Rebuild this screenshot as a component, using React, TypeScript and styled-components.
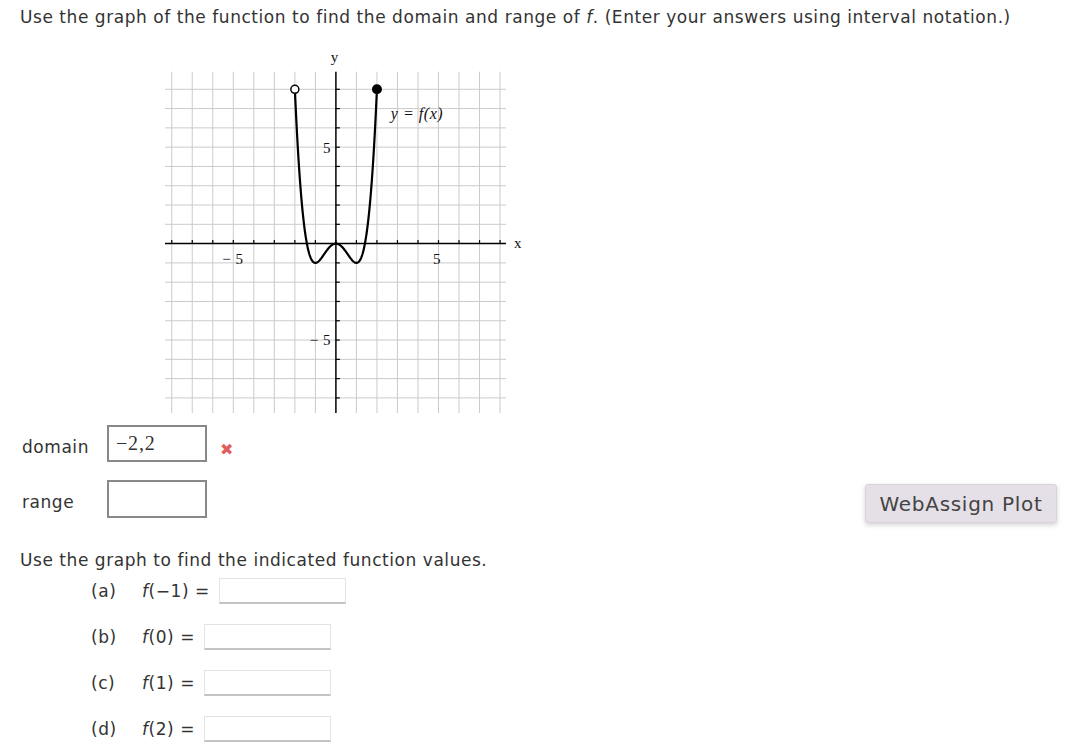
import styled, { createGlobalStyle } from 'styled-components';

const GlobalStyle = createGlobalStyle`
  html, body {
    margin: 0;
    padding: 0;
    background: #fff;
  }
  body {
    font-family: 'DejaVu Sans', Verdana, sans-serif;
    color: #333;
  }
`;

const Page = styled.div`
  width: 1084px;
  height: 756px;
  box-sizing: border-box;
  padding: 7px 27px 0 20px;
  display: flex;
  flex-direction: column;
  font-size: 17px;
  letter-spacing: 0.55px;
`;

const Prompt = styled.p`
  margin: 0;
  line-height: 20px;
  white-space: nowrap;
`;

const GraphWrap = styled.div`
  margin: 18px 0 0 140px;
  height: 372px;
`;

const AnswerRow = styled.div<{ gapTop: number }>`
  display: flex;
  align-items: flex-start;
  margin-top: ${({ gapTop }) => gapTop}px;
`;

const FieldLabel = styled.span`
  width: 85px;
  padding: 12px 0 0 2px;
  line-height: 20px;
`;

const MathBox = styled.div<{ tall?: boolean }>`
  width: 100px;
  height: ${({ tall }) => (tall ? 38 : 37)}px;
  box-sizing: border-box;
  border: 2px solid #888;
  padding: 0 0 1px 7px;
  font-family: 'Liberation Serif', 'Times New Roman', serif;
  font-size: 20px;
  letter-spacing: 0.8px;
  color: #333;
  display: flex;
  align-items: center;
`;

const WrongMark = styled.span`
  margin: 18px 0 0 13px;
  color: #e35d5d;
  font-size: 16px;
  line-height: 14px;
`;

const PlotButton = styled.button`
  margin: 4px 0 0 auto;
  height: 39px;
  width: 192px;
  border: 1px solid #d8d4da;
  border-radius: 3px;
  background: #e5e0e7;
  box-shadow: 0 2px 5px rgba(0, 0, 0, 0.18);
  font-family: 'DejaVu Sans', Verdana, sans-serif;
  font-size: 20px;
  letter-spacing: 0.7px;
  color: #444;
  padding: 0;
`;

const SectionHead = styled.p`
  margin: 27px 0 0 0;
  line-height: 20px;
`;

const ValueList = styled.div`
  display: flex;
  flex-direction: column;
  gap: 20px;
  margin-top: 8px;
  padding-left: 71px;
`;

const ValueRow = styled.div`
  display: flex;
  align-items: center;
  height: 26px;
`;

const Part = styled.span`
  width: 51px;
`;

const Expr = styled.span`
  white-space: nowrap;
  margin-right: 9px;
  i {
    font-style: italic;
  }
`;

const ValueInput = styled.div`
  width: 127px;
  height: 26px;
  flex: none;
  box-sizing: border-box;
  border: 1px solid #e3e3e3;
  border-bottom: 2px solid #c4c4c4;
  background: #fff;
`;

const UX = 20.52;
const UY = 19.29;
const OX = 175.9;
const OY = 198.6;
const sx = (x: number) => OX + x * UX;
const sy = (y: number) => OY - y * UY;

const TOP = 26.7;
const BOTTOM = 368;
const LEFT = 5;
const RIGHT = 346;

const ticks = Array.from({ length: 17 }, (_, i) => i - 8);

const curve = (() => {
  const pts: string[] = [];
  for (let i = 0; i <= 200; i++) {
    const x = -2 + (4 * i) / 200;
    const y = x ** 4 - 2 * x ** 2;
    pts.push(`${i === 0 ? 'M' : 'L'}${sx(x).toFixed(2)} ${sy(y).toFixed(2)}`);
  }
  return pts.join(' ');
})();

const Graph = () => (
  <svg width={380} height={372} viewBox="0 0 380 372">
    <g stroke="#cbcbcb" strokeWidth={1}>
      {ticks.filter((t) => t !== 0).map((t) => (
        <line key={`v${t}`} x1={sx(t)} x2={sx(t)} y1={TOP} y2={BOTTOM} />
      ))}
      {ticks.filter((t) => t !== 0).map((t) => (
        <line key={`h${t}`} x1={LEFT} x2={RIGHT} y1={sy(t)} y2={sy(t)} />
      ))}
    </g>
    <g stroke="#000" strokeWidth={1.5}>
      <line x1={LEFT} x2={RIGHT} y1={OY} y2={OY} />
      <line x1={OX} x2={OX} y1={TOP} y2={BOTTOM} />
      {ticks.map((t) => (
        <line key={`tx${t}`} x1={sx(t)} x2={sx(t)} y1={OY - 3.5} y2={OY} strokeWidth={1.2} />
      ))}
      {ticks.map((t) => (
        <line key={`ty${t}`} x1={OX} x2={OX + 4} y1={sy(t)} y2={sy(t)} strokeWidth={1.2} />
      ))}
    </g>
    <g fontFamily="'Liberation Serif', 'Times New Roman', serif" fontSize={15} fill="#111">
      <text x={OX - 1} y={17} textAnchor="middle">y</text>
      <text x={358} y={203} textAnchor="middle">x</text>
      <text x={171} y={108} textAnchor="end">5</text>
      <text x={171} y={300} textAnchor="end">− 5</text>
      <text x={73} y={219} textAnchor="middle">− 5</text>
      <text x={277} y={219} textAnchor="middle">5</text>
      <text x={257} y={74} textAnchor="middle" fontStyle="italic" fontSize={16}>
        y = f(x)
      </text>
    </g>
    <path d={curve} fill="none" stroke="#000" strokeWidth={2.2} />
    <circle cx={sx(-2)} cy={sy(8)} r={4} fill="#fff" stroke="#000" strokeWidth={1.5} />
    <circle cx={sx(2)} cy={sy(8)} r={5} fill="#000" />
  </svg>
);

const values = [
  { part: '(a)', arg: '−1' },
  { part: '(b)', arg: '0' },
  { part: '(c)', arg: '1' },
  { part: '(d)', arg: '2' },
];

export default function App() {
  return (
    <>
      <GlobalStyle />
      <Page>
        <Prompt>
          Use the graph of the function to find the domain and range of <i>f</i>. (Enter your answers using
          interval notation.)
        </Prompt>

        <GraphWrap>
          <Graph />
        </GraphWrap>

        <AnswerRow gapTop={8}>
          <FieldLabel>domain</FieldLabel>
          <MathBox>−2,2</MathBox>
          <WrongMark>✖</WrongMark>
        </AnswerRow>

        <AnswerRow gapTop={18}>
          <FieldLabel>range</FieldLabel>
          <MathBox tall />
          <PlotButton type="button">WebAssign Plot</PlotButton>
        </AnswerRow>

        <SectionHead>Use the graph to find the indicated function values.</SectionHead>

        <ValueList>
          {values.map((v) => (
            <ValueRow key={v.part}>
              <Part>{v.part}</Part>
              <Expr>
                <i>f</i>({v.arg}) =
              </Expr>
              <ValueInput />
            </ValueRow>
          ))}
        </ValueList>
      </Page>
    </>
  );
}
